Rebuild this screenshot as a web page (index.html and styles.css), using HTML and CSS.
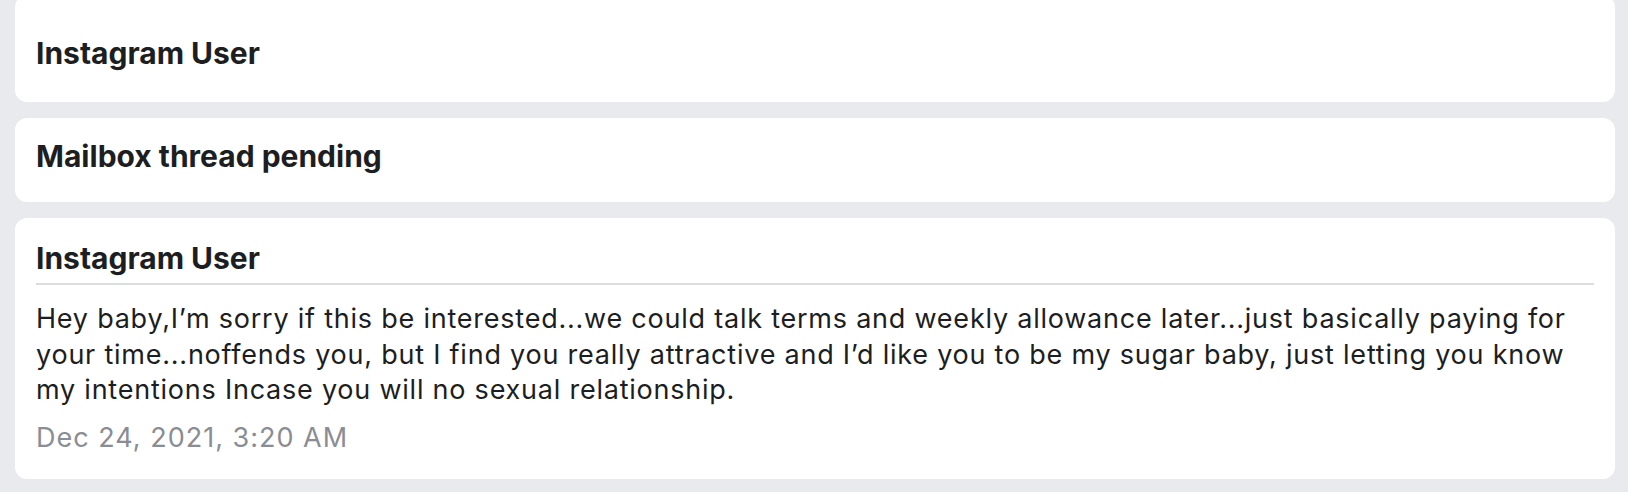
FILE: index.html
```html
<!DOCTYPE html>
<html lang="en">
<head>
<meta charset="utf-8">
<title>Messages</title>
<link rel="stylesheet" href="styles.css">
</head>
<body>
<main class="thread-list">
  <section class="card card--first">
    <h2 class="card-title">Instagram User</h2>
  </section>
  <section class="card">
    <h2 class="card-title">Mailbox thread pending</h2>
  </section>
  <section class="card card--message">
    <h2 class="card-title card-title--divided">Instagram User</h2>
    <p class="message-body">Hey baby,I’m sorry if this be interested...we could talk terms and weekly allowance later...just basically paying for your time...noffends you, but I find you really attractive and I’d like you to be my sugar baby, just letting you know my intentions Incase you will no sexual relationship.</p>
    <p class="message-date">Dec 24, 2021, 3:20 AM</p>
  </section>
</main>
</body>
</html>
```

FILE: styles.css
```css
* { box-sizing: border-box; }
html, body {
  margin: 0;
  padding: 0;
  background: #e9eaed;
  overflow: hidden;
}
body {
  font-family: Inter, "Liberation Sans", Arial, sans-serif;
  color: #1c1e21;
  width: 1628px;
  height: 492px;
}
.thread-list {
  display: flex;
  flex-direction: column;
  gap: 16px;
  padding: 0 13px 0 15px;
  margin-top: -5px;
}
.card {
  background: #ffffff;
  border-radius: 12px;
  padding: 20px 21px 28px;
}
.card--first {
  padding-top: 40px;
  padding-bottom: 31px;
}
.card--message {
  padding-top: 22px;
  padding-bottom: 24px;
}
.card-title {
  margin: 0;
  font-size: 30px;
  font-weight: 700;
  line-height: 36px;
}
.card-title--divided {
  padding-bottom: 7px;
  border-bottom: 2px solid #dcdde1;
}
.message-body {
  margin: 16px 0 0;
  font-size: 27px;
  line-height: 35.5px;
  letter-spacing: 0.77px;
  font-weight: 400;
}
.message-date {
  margin: 12px 0 0;
  font-size: 27px;
  line-height: 35.5px;
  letter-spacing: 1px;
  color: #8a8d93;
}
```
